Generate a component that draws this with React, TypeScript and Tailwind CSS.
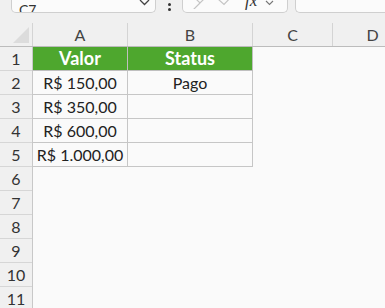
import React from 'react';

const cols = [
  { label: 'A', w: 'w-[95px]' },
  { label: 'B', w: 'w-[125px]' },
  { label: 'C', w: 'w-[80px]' },
  { label: 'D', w: 'w-[80px]' },
];

const values = ['R$ 150,00', 'R$ 350,00', 'R$ 600,00', 'R$ 1.000,00'];
const status = ['Pago', '', '', ''];

const font = { fontFamily: 'Lato, "Noto Sans", sans-serif' };

const App = () => {
  return (
    <div className="w-[385px] h-[308px] overflow-hidden bg-[#f0f0f0] text-[#222]" style={font}>
      {/* toolbar */}
      <div className="h-[23px] flex items-start">
        <div className="ml-[11px] w-[145px] h-[14px] -mt-[1px] rounded-b-[5px] border border-t-0 border-[#cfcfcf] bg-[#fbfbfb] flex items-end justify-between pl-[7px] pr-[5px] overflow-hidden">
          <span className="text-[14px] leading-[14px] -mb-[5px] text-[#333]">C7</span>
          <svg width="11" height="8" viewBox="0 0 11 8" className="mb-[5px]">
            <path d="M1 1 L5.5 5.5 L10 1" fill="none" stroke="#444" strokeWidth="1.3" />
          </svg>
        </div>
        <div className="w-[26px] flex justify-center">
          <div className="flex flex-col gap-[2px] mt-[3px]">
            <span className="w-[3px] h-[3px] bg-[#333] rounded-full" />
            <span className="w-[3px] h-[3px] bg-[#333] rounded-full" />
          </div>
        </div>
        <div className="w-[106px] h-[14px] -mt-[1px] rounded-b-[5px] border border-t-0 border-[#cfcfcf] bg-[#fbfbfb] flex items-start overflow-hidden">
          <svg width="18" height="10" viewBox="0 0 18 10" className="ml-[8px]">
            <path d="M2 -3 L9 4 L16 -3 M2 11 L9 4" fill="none" stroke="#c4c4c4" strokeWidth="1.2" />
          </svg>
          <svg width="16" height="10" viewBox="0 0 16 10" className="ml-[8px]">
            <path d="M1 0 L7 5.5 L15 -3" fill="none" stroke="#c4c4c4" strokeWidth="1.2" />
          </svg>
          <span
            className="ml-[12px] -mt-[7px] text-[17px] leading-[17px] italic text-[#333]"
            style={{ fontFamily: '"Liberation Serif", serif' }}
          >
            fx
          </span>
          <svg width="9" height="6" viewBox="0 0 9 6" className="ml-[8px] mt-[1px]">
            <path d="M1 1 L4.5 4.5 L8 1" fill="none" stroke="#777" strokeWidth="1.1" />
          </svg>
        </div>
        <div className="ml-[7px] flex-1 h-[14px] -mt-[1px] rounded-bl-[5px] border border-t-0 border-r-0 border-[#cfcfcf] bg-[#fbfbfb]" />
      </div>

      {/* column headers */}
      <div className="flex h-[24px] border-b border-[#bcbcbc]">
        <div className="w-[33px] shrink-0 border-r border-[#d4d4d4] flex items-end justify-end p-[3px]">
          <svg width="16" height="16" viewBox="0 0 16 16">
            <path d="M16 0 L16 16 L0 16 Z" fill="#dcdcdc" />
          </svg>
        </div>
        {cols.map((c) => (
          <div
            key={c.label}
            className={`${c.w} shrink-0 border-r border-[#d4d4d4] flex items-center justify-center text-[16px] text-[#444]`}
          >
            {c.label}
          </div>
        ))}
      </div>

      {/* rows */}
      <div className="flex">
        <div className="w-[33px] shrink-0 border-r border-[#c8c8c8] flex flex-col">
          {Array.from({ length: 11 }, (_, i) => (
            <div
              key={i}
              className="h-[24px] shrink-0 border-b border-[#d6d6d6] flex items-center justify-center text-[16px] text-[#333]"
            >
              {i + 1}
            </div>
          ))}
        </div>
        <div className="flex-1 bg-[#fafafa] h-[264px]">
          <div className="flex w-[221px] h-[24px]">
            <div className="w-[95px] shrink-0 bg-[#4ea72e] border-r border-b border-[#bfbfbf] flex items-center justify-center text-white font-bold text-[18px]">
              Valor
            </div>
            <div className="w-[125px] shrink-0 bg-[#4ea72e] border-r border-b border-[#bfbfbf] flex items-center justify-center text-white font-bold text-[18px]">
              Status
            </div>
          </div>
          {values.map((v, i) => (
            <div key={v} className="flex h-[24px]">
              <div className="w-[95px] shrink-0 border-r border-b border-[#c6c6c6] flex items-center justify-center text-[16px] whitespace-nowrap">
                {v}
              </div>
              <div className="w-[125px] shrink-0 border-r border-b border-[#c6c6c6] flex items-center justify-center text-[16px]">
                {status[i]}
              </div>
            </div>
          ))}
        </div>
      </div>
    </div>
  );
};

export default App;
